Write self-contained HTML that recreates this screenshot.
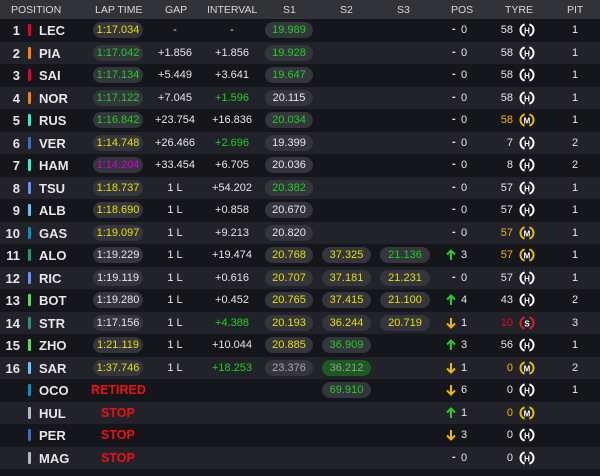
<!DOCTYPE html><html><head><meta charset="utf-8"><style>
*{margin:0;padding:0;box-sizing:border-box}
body{width:600px;height:476px;background:#15161c;font-family:"Liberation Sans",sans-serif;color:#e6e6e6;position:relative;overflow:hidden}
.h{position:absolute;left:0;top:0;width:600px;height:19px;background:#323339;font-size:10.5px;color:#d8d8d8}
.h span{position:absolute;top:4px}
.r{position:absolute;left:0;width:600px;height:22.5px;font-size:11px}
.r:nth-child(even){background:#22232a}
.r:nth-child(odd){background:#15161c}
.r>*{position:absolute}
.n{left:0;width:20px;text-align:right;top:4px;font-weight:bold;font-size:13px}
.b{left:28px;top:5px;width:3px;height:12px;border-radius:1px}
.c{left:39px;top:4px;font-weight:bold;font-size:13px}
.p{height:16px;top:3px;border-radius:8px;background:#34353d;text-align:center;line-height:16px}
.lt{left:93px;width:50px}
.s1{left:265px;width:48px}
.s2{left:322px;width:49px}
.s3{left:380px;width:50px}
.g{left:145px;width:60px;text-align:center;top:5px}
.i{left:202px;width:60px;text-align:center;top:5px}
.a{left:446px;top:5px}
.d{left:452px;top:4px;font-weight:bold}
.pn{left:461px;top:5px}
.tn{left:488px;width:25px;text-align:right;top:5px}
.t{left:519px;top:3px}
.pt{left:565px;width:20px;text-align:center;top:5px}
.y{color:#e8e000}.gr{color:#1fd11f}.pu{color:#d400d4}.o{color:#f0b800}.rd{color:#e01010}
.st{color:#f01010;font-weight:bold;font-size:12.5px;top:4px}
</style></head><body>
<div class="h"><span style="left:11px">POSITION</span><span style="left:95px">LAP TIME</span><span style="left:165px">GAP</span><span style="left:207px">INTERVAL</span><span style="left:283px">S1</span><span style="left:340px">S2</span><span style="left:397px">S3</span><span style="left:451px">POS</span><span style="left:505px">TYRE</span><span style="left:567px">PIT</span></div>
<svg width="0" height="0" style="position:absolute"><defs>
<symbol id="tw" viewBox="0 0 16 16"><path d="M5.6 2.3A6 6 0 0 0 5.6 13.7M10.4 2.3A6 6 0 0 1 10.4 13.7" fill="none" stroke-width="2"/></symbol>
<symbol id="up" viewBox="0 0 10 12"><path d="M5 11V2M1 5.5L5 1.5L9 5.5" fill="none" stroke="#22d022" stroke-width="2"/></symbol>
<symbol id="dn" viewBox="0 0 10 12"><path d="M5 1V10M1 6.5L5 10.5L9 6.5" fill="none" stroke="#f0b800" stroke-width="2"/></symbol>
</defs></svg>
<div style="position:absolute;left:0;top:19px;width:600px">
<div class="r" style="top:0"><span class="n">1</span><span class="b" style="background:#e8002d"></span><span class="c">LEC</span><span class="p lt y">1:17.034</span><span class="g">-</span><span class="i">-</span><span class="p s1 gr">19.989</span><span class="d">-</span><span class="pn">0</span><span class="tn">58</span><svg class="t" width="16" height="16"><use href="#tw" stroke="#fff"/><text x="8" y="11.3" font-size="8" font-weight="bold" text-anchor="middle" fill="#fff" font-family="Liberation Sans">H</text></svg><span class="pt">1</span></div>
<div class="r" style="top:22.5px"><span class="n">2</span><span class="b" style="background:#ff8000"></span><span class="c">PIA</span><span class="p lt gr">1:17.042</span><span class="g">+1.856</span><span class="i">+1.856</span><span class="p s1 gr">19.928</span><span class="d">-</span><span class="pn">0</span><span class="tn">58</span><svg class="t" width="16" height="16"><use href="#tw" stroke="#fff"/><text x="8" y="11.3" font-size="8" font-weight="bold" text-anchor="middle" fill="#fff" font-family="Liberation Sans">H</text></svg><span class="pt">1</span></div>
<div class="r" style="top:45px"><span class="n">3</span><span class="b" style="background:#e8002d"></span><span class="c">SAI</span><span class="p lt gr">1:17.134</span><span class="g">+5.449</span><span class="i">+3.641</span><span class="p s1 gr">19.647</span><span class="d">-</span><span class="pn">0</span><span class="tn">58</span><svg class="t" width="16" height="16"><use href="#tw" stroke="#fff"/><text x="8" y="11.3" font-size="8" font-weight="bold" text-anchor="middle" fill="#fff" font-family="Liberation Sans">H</text></svg><span class="pt">1</span></div>
<div class="r" style="top:67.5px"><span class="n">4</span><span class="b" style="background:#ff8000"></span><span class="c">NOR</span><span class="p lt gr">1:17.122</span><span class="g">+7.045</span><span class="i gr">+1.596</span><span class="p s1">20.115</span><span class="d">-</span><span class="pn">0</span><span class="tn">58</span><svg class="t" width="16" height="16"><use href="#tw" stroke="#fff"/><text x="8" y="11.3" font-size="8" font-weight="bold" text-anchor="middle" fill="#fff" font-family="Liberation Sans">H</text></svg><span class="pt">1</span></div>
<div class="r" style="top:90px"><span class="n">5</span><span class="b" style="background:#27f4d2"></span><span class="c">RUS</span><span class="p lt gr">1:16.842</span><span class="g">+23.754</span><span class="i">+16.836</span><span class="p s1 gr">20.034</span><span class="d">-</span><span class="pn">0</span><span class="tn o">58</span><svg class="t" width="16" height="16"><use href="#tw" stroke="#f0c000"/><text x="8" y="11.3" font-size="8" font-weight="bold" text-anchor="middle" fill="#fff" font-family="Liberation Sans">M</text></svg><span class="pt">1</span></div>
<div class="r" style="top:112.5px"><span class="n">6</span><span class="b" style="background:#3671c6"></span><span class="c">VER</span><span class="p lt y">1:14.748</span><span class="g">+26.466</span><span class="i gr">+2.696</span><span class="p s1">19.399</span><span class="d">-</span><span class="pn">0</span><span class="tn">7</span><svg class="t" width="16" height="16"><use href="#tw" stroke="#fff"/><text x="8" y="11.3" font-size="8" font-weight="bold" text-anchor="middle" fill="#fff" font-family="Liberation Sans">H</text></svg><span class="pt">2</span></div>
<div class="r" style="top:135px"><span class="n">7</span><span class="b" style="background:#27f4d2"></span><span class="c">HAM</span><span class="p lt pu">1:14.204</span><span class="g">+33.454</span><span class="i">+6.705</span><span class="p s1">20.036</span><span class="d">-</span><span class="pn">0</span><span class="tn">8</span><svg class="t" width="16" height="16"><use href="#tw" stroke="#fff"/><text x="8" y="11.3" font-size="8" font-weight="bold" text-anchor="middle" fill="#fff" font-family="Liberation Sans">H</text></svg><span class="pt">2</span></div>
<div class="r" style="top:157.5px"><span class="n">8</span><span class="b" style="background:#6692ff"></span><span class="c">TSU</span><span class="p lt y">1:18.737</span><span class="g">1 L</span><span class="i">+54.202</span><span class="p s1 gr">20.382</span><span class="d">-</span><span class="pn">0</span><span class="tn">57</span><svg class="t" width="16" height="16"><use href="#tw" stroke="#fff"/><text x="8" y="11.3" font-size="8" font-weight="bold" text-anchor="middle" fill="#fff" font-family="Liberation Sans">H</text></svg><span class="pt">1</span></div>
<div class="r" style="top:180px"><span class="n">9</span><span class="b" style="background:#64c4ff"></span><span class="c">ALB</span><span class="p lt y">1:18.690</span><span class="g">1 L</span><span class="i">+0.858</span><span class="p s1">20.670</span><span class="d">-</span><span class="pn">0</span><span class="tn">57</span><svg class="t" width="16" height="16"><use href="#tw" stroke="#fff"/><text x="8" y="11.3" font-size="8" font-weight="bold" text-anchor="middle" fill="#fff" font-family="Liberation Sans">H</text></svg><span class="pt">1</span></div>
<div class="r" style="top:202.5px"><span class="n">10</span><span class="b" style="background:#0093cc"></span><span class="c">GAS</span><span class="p lt y">1:19.097</span><span class="g">1 L</span><span class="i">+9.213</span><span class="p s1">20.820</span><span class="d">-</span><span class="pn">0</span><span class="tn o">57</span><svg class="t" width="16" height="16"><use href="#tw" stroke="#f0c000"/><text x="8" y="11.3" font-size="8" font-weight="bold" text-anchor="middle" fill="#fff" font-family="Liberation Sans">M</text></svg><span class="pt">1</span></div>
<div class="r" style="top:225px"><span class="n">11</span><span class="b" style="background:#229971"></span><span class="c">ALO</span><span class="p lt">1:19.229</span><span class="g">1 L</span><span class="i">+19.474</span><span class="p s1 y">20.768</span><span class="p s2 y">37.325</span><span class="p s3 gr">21.136</span><svg class="a" width="10" height="12"><use href="#up"/></svg><span class="pn">3</span><span class="tn o">57</span><svg class="t" width="16" height="16"><use href="#tw" stroke="#f0c000"/><text x="8" y="11.3" font-size="8" font-weight="bold" text-anchor="middle" fill="#fff" font-family="Liberation Sans">M</text></svg><span class="pt">1</span></div>
<div class="r" style="top:247.5px"><span class="n">12</span><span class="b" style="background:#6692ff"></span><span class="c">RIC</span><span class="p lt">1:19.119</span><span class="g">1 L</span><span class="i">+0.616</span><span class="p s1 y">20.707</span><span class="p s2 y">37.181</span><span class="p s3 y">21.231</span><span class="d">-</span><span class="pn">0</span><span class="tn">57</span><svg class="t" width="16" height="16"><use href="#tw" stroke="#fff"/><text x="8" y="11.3" font-size="8" font-weight="bold" text-anchor="middle" fill="#fff" font-family="Liberation Sans">H</text></svg><span class="pt">1</span></div>
<div class="r" style="top:270px"><span class="n">13</span><span class="b" style="background:#52e252"></span><span class="c">BOT</span><span class="p lt">1:19.280</span><span class="g">1 L</span><span class="i">+0.452</span><span class="p s1 y">20.765</span><span class="p s2 y">37.415</span><span class="p s3 y">21.100</span><svg class="a" width="10" height="12"><use href="#up"/></svg><span class="pn">4</span><span class="tn">43</span><svg class="t" width="16" height="16"><use href="#tw" stroke="#fff"/><text x="8" y="11.3" font-size="8" font-weight="bold" text-anchor="middle" fill="#fff" font-family="Liberation Sans">H</text></svg><span class="pt">2</span></div>
<div class="r" style="top:292.5px"><span class="n">14</span><span class="b" style="background:#229971"></span><span class="c">STR</span><span class="p lt">1:17.156</span><span class="g">1 L</span><span class="i gr">+4.388</span><span class="p s1 y">20.193</span><span class="p s2 y">36.244</span><span class="p s3 y">20.719</span><svg class="a" width="10" height="12"><use href="#dn"/></svg><span class="pn">1</span><span class="tn rd">10</span><svg class="t" width="16" height="16"><use href="#tw" stroke="#e02020"/><text x="8" y="11.3" font-size="8" font-weight="bold" text-anchor="middle" fill="#fff" font-family="Liberation Sans">S</text></svg><span class="pt">3</span></div>
<div class="r" style="top:315px"><span class="n">15</span><span class="b" style="background:#52e252"></span><span class="c">ZHO</span><span class="p lt y">1:21.119</span><span class="g">1 L</span><span class="i">+10.044</span><span class="p s1 y">20.885</span><span class="p s2 gr">36.909</span><svg class="a" width="10" height="12"><use href="#up"/></svg><span class="pn">3</span><span class="tn">56</span><svg class="t" width="16" height="16"><use href="#tw" stroke="#fff"/><text x="8" y="11.3" font-size="8" font-weight="bold" text-anchor="middle" fill="#fff" font-family="Liberation Sans">H</text></svg><span class="pt">1</span></div>
<div class="r" style="top:337.5px"><span class="n">16</span><span class="b" style="background:#64c4ff"></span><span class="c">SAR</span><span class="p lt y">1:37.746</span><span class="g">1 L</span><span class="i gr">+18.253</span><span class="p s1" style="color:#aaa">23.376</span><span class="p s2" style="background:#1c5a22;color:#999">36.212</span><svg class="a" width="10" height="12"><use href="#dn"/></svg><span class="pn">1</span><span class="tn o">0</span><svg class="t" width="16" height="16"><use href="#tw" stroke="#f0c000"/><text x="8" y="11.3" font-size="8" font-weight="bold" text-anchor="middle" fill="#fff" font-family="Liberation Sans">M</text></svg><span class="pt">2</span></div>
<div class="r" style="top:360px"><span class="b" style="background:#0093cc"></span><span class="c">OCO</span><span class="st" style="left:91px">RETIRED</span><span class="p s2 gr">69.910</span><svg class="a" width="10" height="12"><use href="#dn"/></svg><span class="pn">6</span><span class="tn">0</span><svg class="t" width="16" height="16"><use href="#tw" stroke="#fff"/><text x="8" y="11.3" font-size="8" font-weight="bold" text-anchor="middle" fill="#fff" font-family="Liberation Sans">H</text></svg><span class="pt">1</span></div>
<div class="r" style="top:382.5px"><span class="b" style="background:#b6babd"></span><span class="c">HUL</span><span class="st" style="left:101px">STOP</span><svg class="a" width="10" height="12"><use href="#up"/></svg><span class="pn">1</span><span class="tn o">0</span><svg class="t" width="16" height="16"><use href="#tw" stroke="#f0c000"/><text x="8" y="11.3" font-size="8" font-weight="bold" text-anchor="middle" fill="#fff" font-family="Liberation Sans">M</text></svg></div>
<div class="r" style="top:405px"><span class="b" style="background:#3671c6"></span><span class="c">PER</span><span class="st" style="left:101px">STOP</span><svg class="a" width="10" height="12"><use href="#dn"/></svg><span class="pn">3</span><span class="tn">0</span><svg class="t" width="16" height="16"><use href="#tw" stroke="#fff"/><text x="8" y="11.3" font-size="8" font-weight="bold" text-anchor="middle" fill="#fff" font-family="Liberation Sans">H</text></svg></div>
<div class="r" style="top:427.5px"><span class="b" style="background:#b6babd"></span><span class="c">MAG</span><span class="st" style="left:101px">STOP</span><span class="d">-</span><span class="pn">0</span><span class="tn">0</span><svg class="t" width="16" height="16"><use href="#tw" stroke="#fff"/><text x="8" y="11.3" font-size="8" font-weight="bold" text-anchor="middle" fill="#fff" font-family="Liberation Sans">H</text></svg></div>
</div>
</body></html>
